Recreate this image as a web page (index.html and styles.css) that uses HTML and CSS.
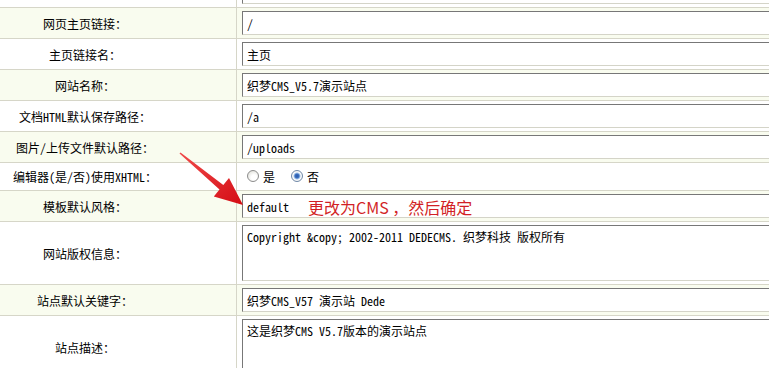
FILE: index.html
```html
<!DOCTYPE html>
<html lang="zh-CN">
<head>
    <meta charset="UTF-8">
    <meta name="viewport" content="width=device-width, initial-scale=1.0">
    <title>系统基本参数</title>
    <link rel="stylesheet" href="styles.css">
</head>
<body>
<div class="page">
    <table class="config">
        <tr>
            <td class="label"></td>
            <td class="field"><input type="text" class="textbox" value=""></td>
        </tr>
        <tr class="cream">
            <td class="label">网页主页链接：</td>
            <td class="field"><input type="text" class="textbox" value="/"></td>
        </tr>
        <tr>
            <td class="label">主页链接名：</td>
            <td class="field"><input type="text" class="textbox" value="主页"></td>
        </tr>
        <tr class="cream">
            <td class="label">网站名称：</td>
            <td class="field"><input type="text" class="textbox" value="织梦CMS_V5.7演示站点"></td>
        </tr>
        <tr>
            <td class="label">文档HTML默认保存路径：</td>
            <td class="field"><input type="text" class="textbox" value="/a"></td>
        </tr>
        <tr class="cream">
            <td class="label">图片/上传文件默认路径：</td>
            <td class="field"><input type="text" class="textbox" value="/uploads"></td>
        </tr>
        <tr class="radio-row">
            <td class="label">编辑器(是/否)使用XHTML：</td>
            <td class="field">
                <label class="option"><input type="radio" name="xhtml" class="radio" value="Y">是</label>
                <label class="option"><input type="radio" name="xhtml" class="radio" value="N" checked>否</label>
            </td>
        </tr>
        <tr class="cream">
            <td class="label">模板默认风格：</td>
            <td class="field">
                <div class="note-wrap">
                    <input type="text" class="textbox" value="default">
                    <span class="note">更改为CMS ，然后确定</span>
                </div>
            </td>
        </tr>
        <tr>
            <td class="label">网站版权信息：</td>
            <td class="field"><textarea class="textarea">Copyright &amp;copy; 2002-2011 DEDECMS. 织梦科技 版权所有</textarea></td>
        </tr>
        <tr class="cream">
            <td class="label">站点默认关键字：</td>
            <td class="field"><input type="text" class="textbox" value="织梦CMS_V57 演示站 Dede"></td>
        </tr>
        <tr>
            <td class="label">站点描述：</td>
            <td class="field"><textarea class="textarea">这是织梦CMS V5.7版本的演示站点</textarea></td>
        </tr>
    </table>

    <!-- red pointer drawn over the form -->
    <svg class="arrow" width="80" height="70" viewBox="170 145 80 70">
        <defs>
            <linearGradient id="arrowfill" x1="0" y1="0" x2="1" y2="1">
                <stop offset="0" stop-color="#f04a4a"/>
                <stop offset="1" stop-color="#d40c14"/>
            </linearGradient>
        </defs>
        <polygon fill="url(#arrowfill)"
                 points="180.5,152.4 223.3,184.9 229,178 243,205 213.8,196.5 219.5,189.5 179.5,153.6"/>
    </svg>
</div>
</body>
</html>
```

FILE: styles.css
```css
body{
    margin: 0;
    background-color: #ffffff;
}

.page{
    position: relative;
    overflow: hidden;
    height: 368px;
}

.config{
    border-collapse: separate;
    border-spacing: 0;
    width: 820px;
    margin-top: -23px;
    font-family: "Noto Sans Mono CJK SC", "Noto Sans CJK SC", monospace;
    font-size: 12px;
    color: #000000;
}

.config td{
    border-bottom: 1px solid #d6d6c8;
    padding: 0;
}

.cream td{
    background-color: #f9fcef;
}

.label{
    width: 170px;
    padding-right: 66px !important;
    border-right: 1px solid #d6d6c8;
    text-align: center;
    vertical-align: middle;
    white-space: nowrap;
}

.field{
    height: 30px;
    padding: 3px 0 3px 5px !important;
    box-sizing: border-box;
    vertical-align: middle;
}

.radio-row .field{
    height: 28px;
    padding: 0 0 0 10px !important;
}

.textbox{
    display: block;
    box-sizing: border-box;
    width: 560px;
    height: 24px;
    margin: 0;
    padding: 0 4px;
    border: 1px solid;
    border-color: #777777 #d4d4c8 #d4d4c8 #777777;
    background-color: #ffffff;
    font-family: "Noto Sans Mono CJK SC", "Noto Sans CJK SC", monospace;
    font-size: 12px;
    color: #000000;
}

.textarea{
    display: block;
    box-sizing: border-box;
    width: 560px;
    height: 56px;
    margin: 0;
    padding: 3px 4px;
    border: 1px solid;
    border-color: #777777 #d4d4c8 #d4d4c8 #777777;
    resize: none;
    font-family: "Noto Sans Mono CJK SC", "Noto Sans CJK SC", monospace;
    font-size: 12px;
    line-height: 16px;
    color: #000000;
}

.option{
    display: inline-flex;
    align-items: center;
    margin-right: 10px;
}

.radio{
    appearance: none;
    width: 12px;
    height: 12px;
    margin: 0 4px 0 0;
    border: 1px solid #8c8c8c;
    border-radius: 50%;
    background: radial-gradient(circle at 60% 65%, #ffffff 30%, #d8d8d0 100%);
}

.radio:checked{
    border-color: #6f88a8;
    background: radial-gradient(circle, #2b59a8 0, #3a6ec0 2px, #9fc1e8 3px, #ffffff 4px, #dcdcd4 100%);
}

.note-wrap{
    position: relative;
}

.note{
    position: absolute;
    left: 66px;
    top: 3px;
    font-family: "Noto Sans CJK SC", sans-serif;
    font-size: 16px;
    line-height: 20px;
    color: #d21f26;
    white-space: nowrap;
}

.arrow{
    position: absolute;
    left: 170px;
    top: 145px;
}
```
